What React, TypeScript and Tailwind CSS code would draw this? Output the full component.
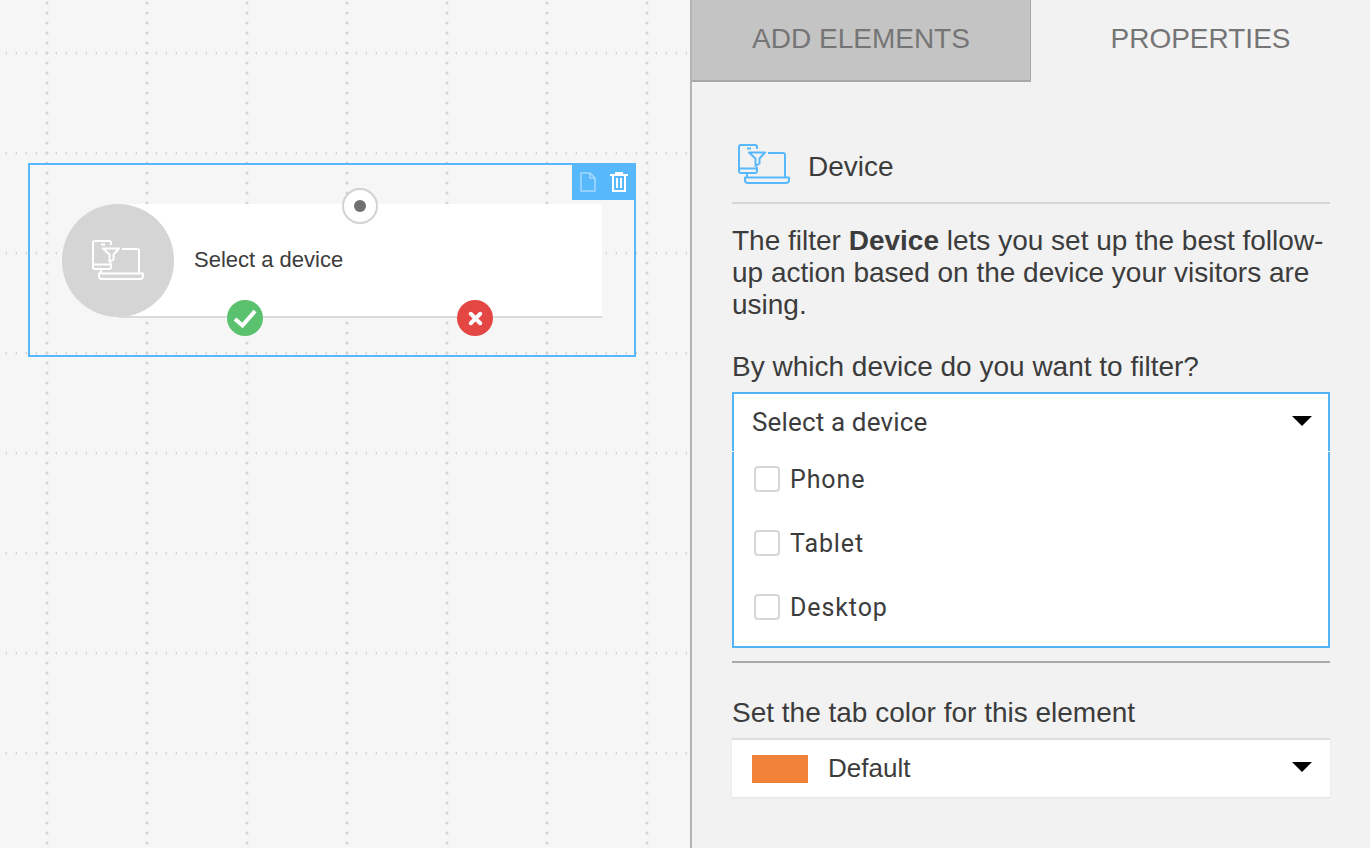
import { X } from "lucide-react";

const sans = "font-['Liberation_Sans',Arial,sans-serif]";
const roboto = "font-['Roboto',sans-serif]";

function DeviceIcon({ className }: { className: string }) {
  return (
    <svg viewBox="0 0 52 40" width={52} height={40} fill="none" stroke="currentColor" strokeWidth={2} strokeLinejoin="round" className={className}>
      <path d="M19 5V3a2 2 0 0 0-2-2H3a2 2 0 0 0-2 2v24a2 2 0 0 0 2 2h14a2 2 0 0 0 2-2v-4" />
      <path d="M1 24.5h18M9 4.500h4" />
      <path d="M11 8.500h16l-5.500 6v5l-4 2.500v-7.500z" />
      <path d="M30 9h15a2 2 0 0 1 2 2v22M9 29v4" />
      <path d="M7 33.500h44V36a3 3 0 0 1-3 3H10a3 3 0 0 1-3-3z" />
    </svg>
  );
}

function Caret({ className = "" }: { className?: string }) {
  return <span className={`h-0 w-0 border-x-[10px] border-t-[10px] border-x-transparent border-t-black ${className}`} />;
}

function Canvas() {
  return (
    <div className="relative h-full w-[690px] shrink-0 overflow-hidden bg-[#f6f6f6] pl-[28px] pt-[163px]">
      <svg className="absolute inset-0 h-full w-full">
        <defs>
          <pattern id="dots-h" width="10" height="100" patternUnits="userSpaceOnUse" x="-3" y="3">
            <circle cx="10" cy="50" r="1.5" fill="#d2d2d2" />
          </pattern>
          <pattern id="dots-v" width="100" height="10" patternUnits="userSpaceOnUse" x="-3" y="3">
            <circle cx="50" cy="0" r="1.5" fill="#d2d2d2" />
            <circle cx="50" cy="10" r="1.5" fill="#d2d2d2" />
          </pattern>
        </defs>
        <rect width="100%" height="100%" fill="url(#dots-h)" />
        <rect width="100%" height="100%" fill="url(#dots-v)" />
      </svg>

      {/* selected node */}
      <div className="relative h-[194px] w-[608px] border-2 border-[#58b8fc] pl-[32px] pt-[39px]">
        <div className="absolute -right-[2px] -top-[2px] flex h-[37px] w-[64px] items-center justify-end gap-[14px] bg-[#58b8fc] pr-[8px]">
          <svg viewBox="0 0 16 20" width={16} height={20} fill="none" stroke="#a5d8fd" strokeWidth={1.600}>
            <path d="M1 1h9l5 5v13H1z" />
            <path d="M10 1v5h5" />
          </svg>
          <svg viewBox="0 0 18 20" width={18} height={20} fill="none" stroke="#fff" strokeWidth={2}>
            <path d="M0 3h18M6 3V1h6v2M3 3v16h12V3M7 6v10M11 6v10" />
          </svg>
        </div>

        <div className="flex h-[114px] w-[540px] items-center">
          <div className="relative z-10 flex h-[113px] w-[112px] shrink-0 items-center justify-center self-start rounded-full bg-[#d5d5d5] pb-[2px]">
            <DeviceIcon className="text-white" />
          </div>
          <div className={`-ml-[56px] flex h-[114px] flex-1 items-center border-b-2 border-[#dcdcdc] bg-white pb-[1px] pl-[76px] text-[22px] text-[#3c3c3c] ${sans}`}>
            Select a device
          </div>
        </div>

        <div className="absolute left-[312px] top-[23px] z-20 flex h-[36px] w-[36px] items-center justify-center rounded-full border-2 border-[#d2d2d2] bg-white">
          <span className="h-[12px] w-[12px] rounded-full bg-[#707070]" />
        </div>
        <div className="absolute left-[197px] top-[135px] z-20 h-[36px] w-[36px] rounded-full bg-[#5ac26f]">
          <svg viewBox="0 0 36 36" width={36} height={36} fill="none" stroke="#fff" strokeWidth={4}>
            <path d="M8 19l7.500 6.500L28 11" />
          </svg>
        </div>
        <div className="absolute left-[427px] top-[135px] z-20 flex h-[36px] w-[36px] items-center justify-center rounded-full bg-[#e44644]">
          <X size={19} color="#fff" strokeWidth={5} />
        </div>
      </div>
    </div>
  );
}

function Option({ label }: { label: string }) {
  return (
    <div className="flex h-[64px] items-center pl-[20px]">
      <span className="h-[26px] w-[26px] rounded-[4px] border-2 border-[#d6d6d6] bg-white" />
      <span className={`ml-[10px] pt-[1px] text-[25px] tracking-[0.9px] text-[#3c3c3c] ${roboto}`}>{label}</span>
    </div>
  );
}

function Panel() {
  return (
    <div className={`flex h-full flex-1 flex-col border-l-2 border-[#b4b4b4] bg-[#f2f2f2] ${sans}`}>
      <div className="flex h-[82px] shrink-0 text-[28px] text-[#757575]">
        <div className="flex w-[339px] items-center justify-center border-b-2 border-r border-[#a8a8a8] bg-[#c4c4c4] pb-[2px]">ADD ELEMENTS</div>
        <div className="flex flex-1 items-center justify-center pb-[4px]">PROPERTIES</div>
      </div>

      <div className="flex flex-col pl-[40px] pr-[40px]">
        <div className="flex h-[122px] items-end border-b-2 border-[#d6d6d6] pb-[18px] pl-[6px]">
          <DeviceIcon className="text-[#58b8fc]" />
          <span className="mb-[1px] ml-[18px] text-[28px] leading-[32px] text-[#3c3c3c]">Device</span>
        </div>

        <p className="mt-[21px] text-[28px] leading-[32px] text-[#3c3c3c]">
          The filter <b>Device</b> lets you set up the best follow-up action based on the device your visitors are using.
        </p>

        <div className="mt-[30px] text-[28px] leading-[32px] text-[#3c3c3c]">By which device do you want to filter?</div>

        {/* open select: head and list are separate boxes, hence the small nick in the border */}
        <div className="mt-[9px] flex flex-col bg-white">
          <div className={`flex h-[59px] shrink-0 items-center justify-between border-2 border-b-0 border-[#50b4f5] pl-[18px] pr-[16px] text-[26px] tracking-[0.15px] text-[#3c3c3c] ${roboto}`}>
            Select a device
            <Caret className="mb-[3px]" />
          </div>
          <div className="mt-px flex h-[196px] flex-col border-2 border-t-0 border-[#50b4f5]">
            <div className="-mt-[5px]">
              <Option label="Phone" />
              <Option label="Tablet" />
              <Option label="Desktop" />
            </div>
          </div>
        </div>

        <div className="mt-[13px] h-[2px] bg-[#a8a8a8]" />

        <div className="mt-[34px] text-[28px] leading-[32px] text-[#3c3c3c]">Set the tab color for this element</div>

        <div className="mt-[9px] flex h-[59px] items-center justify-between border-t-2 border-[#dedede] bg-white pl-[20px] pr-[18px] shadow-[0_1px_2px_rgba(0,0,0,0.08)]">
          <div className="flex items-center">
            <span className="h-[28px] w-[56px] bg-[#f08338]" />
            <span className="ml-[20px] text-[26px] text-[#3c3c3c]">Default</span>
          </div>
          <Caret className="mb-[3px]" />
        </div>
      </div>
    </div>
  );
}

export default function App() {
  return (
    <div className="flex h-[848px] w-[1370px] overflow-hidden">
      <Canvas />
      <Panel />
    </div>
  );
}
